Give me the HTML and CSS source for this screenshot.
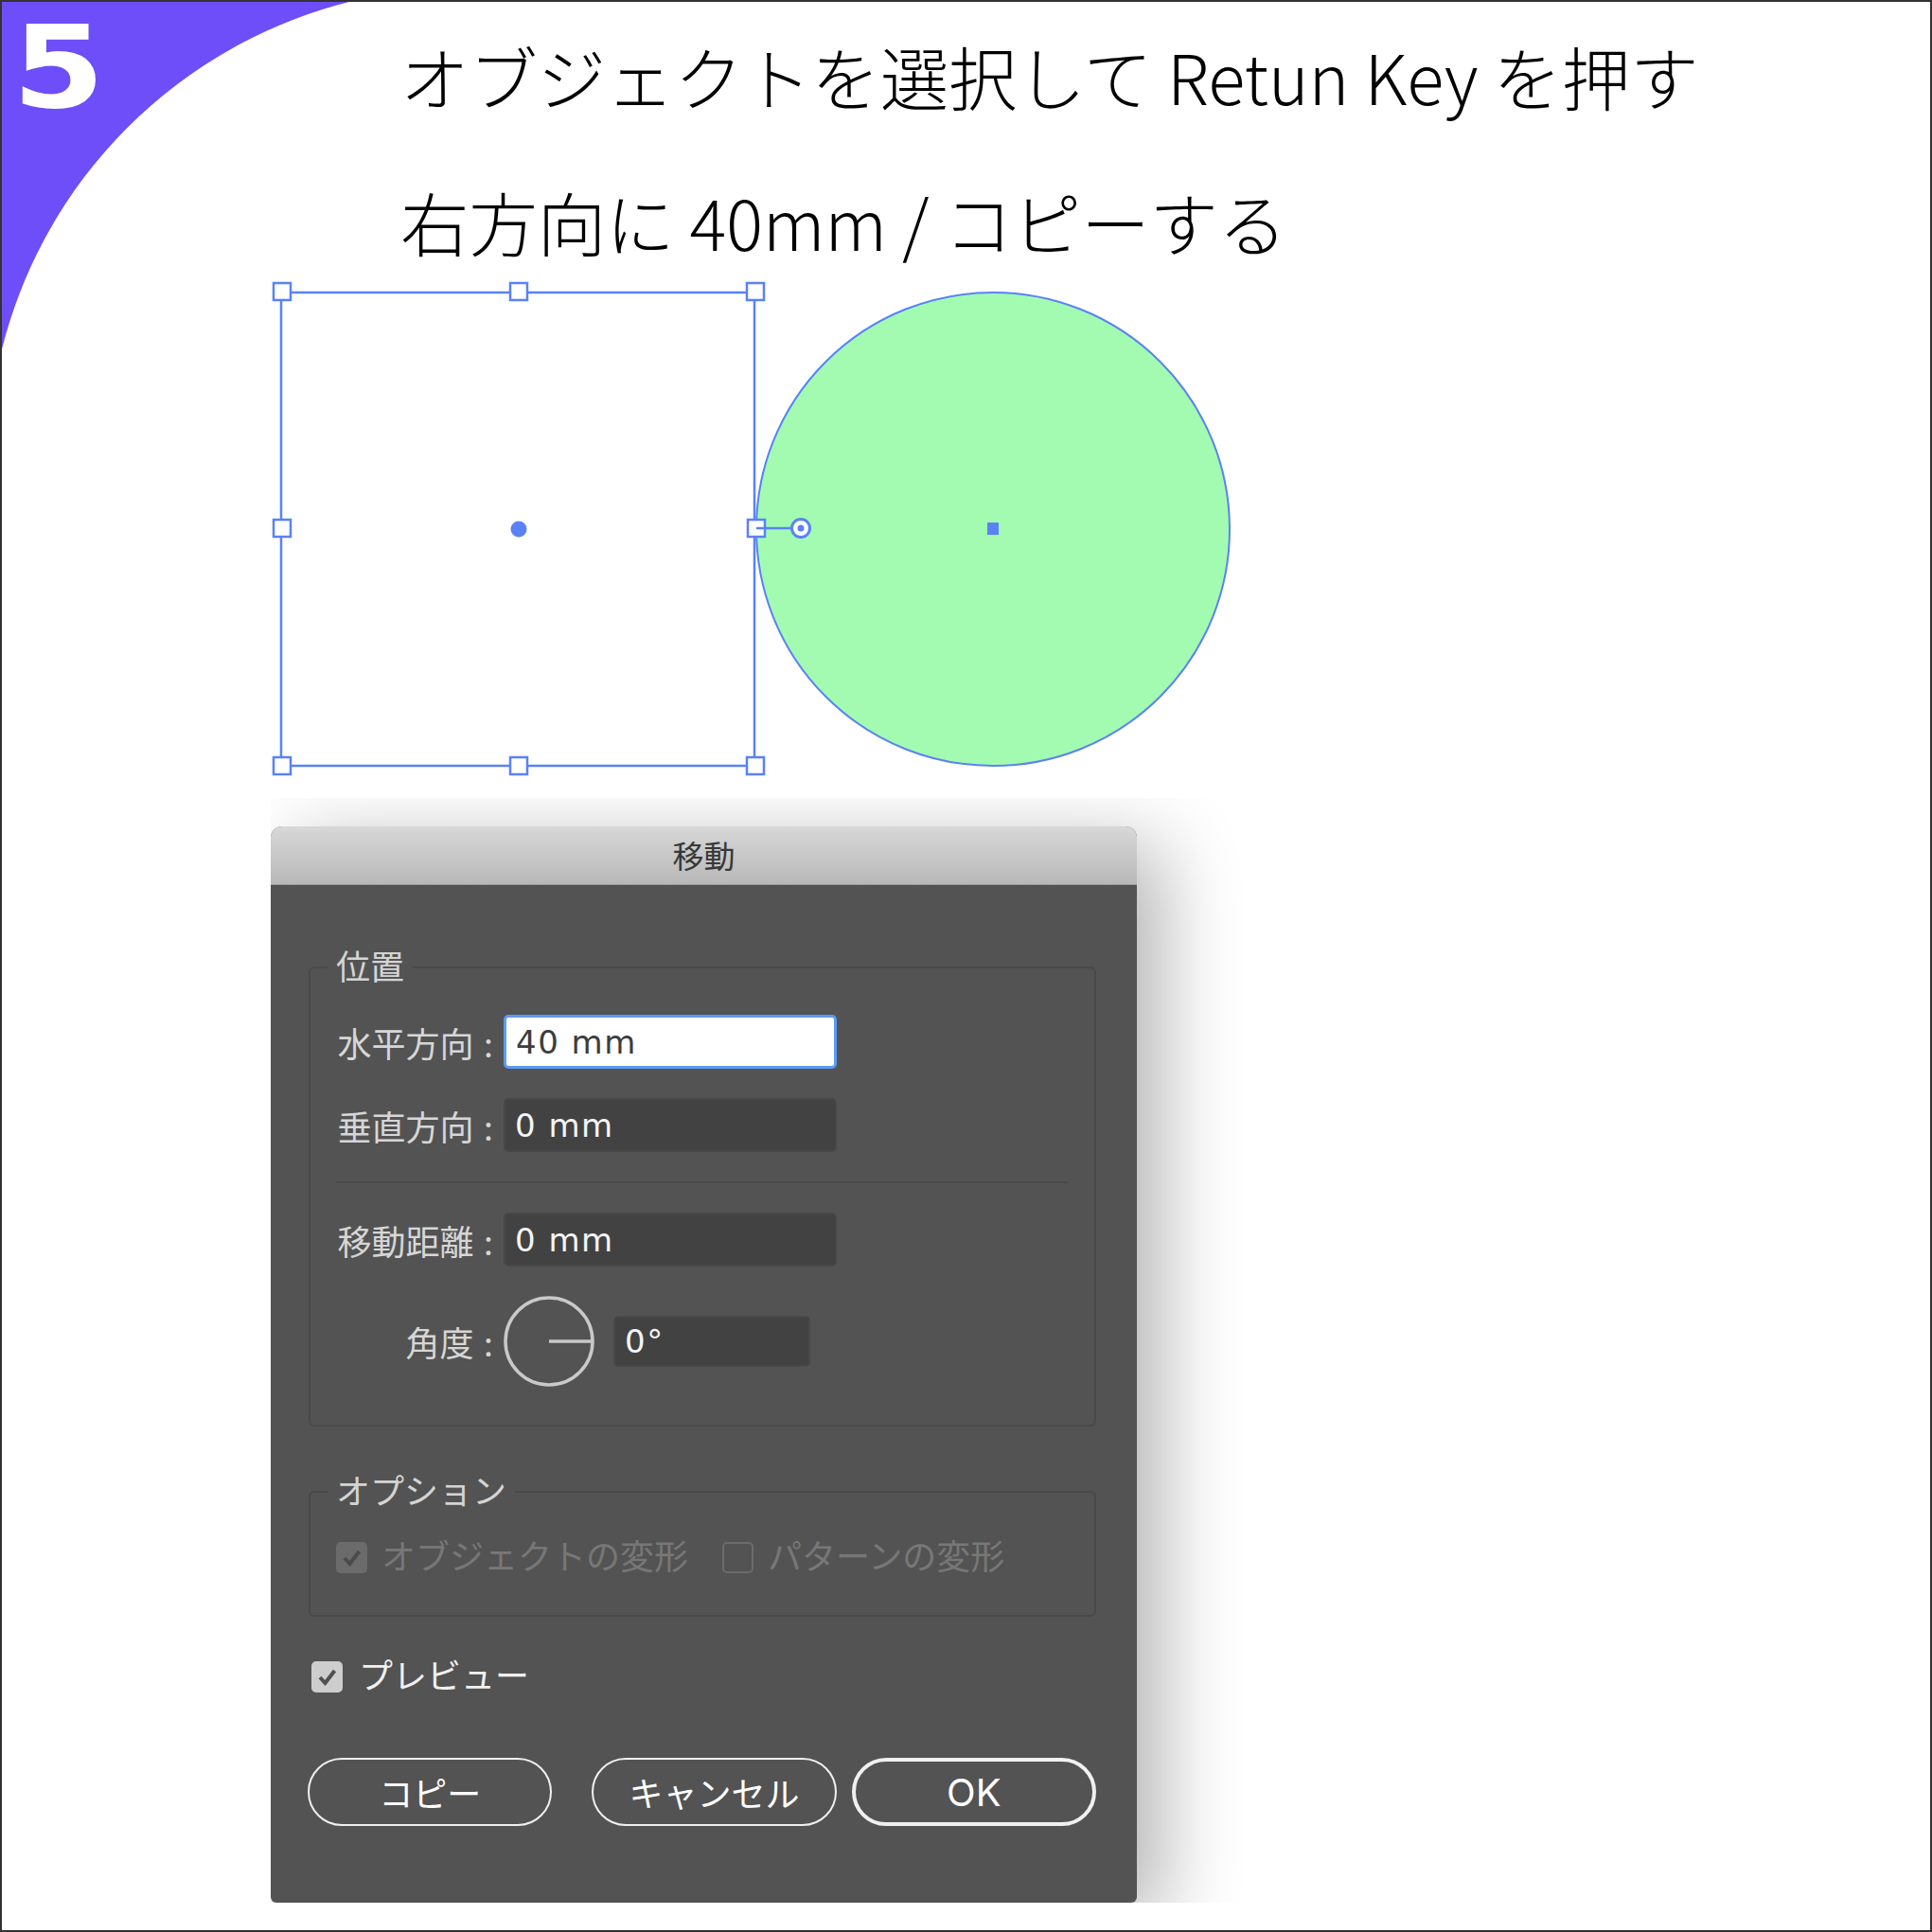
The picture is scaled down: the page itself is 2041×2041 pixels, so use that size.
FILE: index.html
```html
<!DOCTYPE html>
<html lang="ja">
<head>
<meta charset="UTF-8" />
<meta name="viewport" content="width=device-width, initial-scale=1" />
<title>手順5 移動とコピー</title>
<link rel="stylesheet" href="styles.css">
</head>
<body>

<div class="page">
  <svg class="corner" width="380" height="380" viewBox="0 0 380 380" aria-hidden="true">
    <path d="M0 0H377A505 505 0 0 0 0 377Z" fill="#6d4ef9" />
  </svg>
  <span class="step-no">5</span>

  <h1 class="title">
    <span class="title-line">オブジェクトを選択して Retun Key を押す</span>
    <span class="title-line">右方向に 40mm / コピーする</span>
  </h1>

  <!-- artboard: selected square and the green circle being moved -->
  <svg class="artwork" width="1030" height="540" viewBox="280 290 1030 540">
    <circle cx="1049" cy="559" r="250" fill="#a2fbb1" stroke="#5a82f6" stroke-width="2" />
    <rect x="297" y="309" width="500" height="500" fill="none" stroke="#5a82f6" stroke-width="2.5" />
    <g fill="#fff" stroke="#5a82f6" stroke-width="2.5">
      <rect x="289" y="299" width="18" height="18" />
      <rect x="539" y="299" width="18" height="18" />
      <rect x="789" y="299" width="18" height="18" />
      <rect x="289" y="549" width="18" height="18" />
      <rect x="289" y="800" width="18" height="18" />
      <rect x="539" y="800" width="18" height="18" />
      <rect x="789" y="800" width="18" height="18" />
    </g>
    <circle cx="548" cy="559" r="8.5" fill="#5a82f6" />
    <rect x="790" y="549" width="18" height="18" fill="#fff" stroke="#5a82f6" stroke-width="2.5" />
    <line x1="799" y1="558" x2="836" y2="558" stroke="#5a82f6" stroke-width="2.5" />
    <circle cx="846" cy="558" r="9.5" fill="#fff" stroke="#5a82f6" stroke-width="3" />
    <circle cx="846" cy="558" r="3.5" fill="#5a82f6" />
    <rect x="1043" y="552" width="12" height="13" fill="#5a82f6" />
  </svg>

  <div class="dialog-shot">
    <div class="dialog">
      <div class="dialog-title">移動</div>
      <div class="dialog-body">

        <fieldset class="group group-position">
          <legend>位置</legend>
          <div class="field-grid">
            <label for="moveH">水平方向 :</label>
            <input id="moveH" class="num is-focused" value="40 mm" readonly />

            <label for="moveV">垂直方向 :</label>
            <input id="moveV" class="num" value="0 mm" readonly />

            <hr class="sep" />

            <label for="moveDist">移動距離 :</label>
            <input id="moveDist" class="num" value="0 mm" readonly />

            <label for="moveAngle">角度 :</label>
            <div class="angle">
              <svg class="dial" width="96" height="96" viewBox="0 0 96 96">
                <circle cx="48" cy="48" r="46" fill="none" stroke="#c9c9c9" stroke-width="3.5" />
                <line x1="48" y1="48" x2="94" y2="48" stroke="#c9c9c9" stroke-width="3.5" />
              </svg>
              <input id="moveAngle" class="num num-short" value="0°" readonly />
            </div>
          </div>
        </fieldset>

        <fieldset class="group group-options">
          <legend>オプション</legend>
          <div class="check-row">
            <span class="check is-checked is-disabled">
              <svg width="33" height="33" viewBox="0 0 33 33"><path d="M9 17l5.5 6 10-13" fill="none" stroke="#4a4a4a" stroke-width="4" /></svg>
            </span>
            <span class="check-label is-disabled">オブジェクトの変形</span>
            <span class="check is-disabled check-gap"></span>
            <span class="check-label is-disabled">パターンの変形</span>
          </div>
        </fieldset>

        <div class="preview-row">
          <span class="check is-checked">
            <svg width="33" height="33" viewBox="0 0 33 33"><path d="M9 17l5.5 6 10-13" fill="none" stroke="#505050" stroke-width="4" /></svg>
          </span>
          <span class="check-label">プレビュー</span>
        </div>

        <div class="buttons">
          <button type="button" class="btn">コピー</button>
          <button type="button" class="btn btn-cancel">キャンセル</button>
          <button type="button" class="btn btn-default">OK</button>
        </div>

      </div>
    </div>
  </div>
</div>

</body>
</html>
```

FILE: styles.css
```css
body {
  margin: 0;
  background: #fff;
}
.page {
  position: relative;
  width: 2041px;
  height: 2041px;
  box-sizing: border-box;
  border: 2px solid #333;
  overflow: hidden;
  background: #fff;
  font-family: "Noto Sans CJK JP", sans-serif;
}
.corner {
  position: absolute;
  top: -2px;
  left: -2px;
}
.step-no {
  position: absolute;
  top: -1px;
  left: 11px;
  font-family: "DejaVu Sans", sans-serif;
  font-weight: 700;
  font-size: 121px;
  line-height: 141px;
  color: #fff;
  transform: scaleX(1.16);
  transform-origin: left top;
}
.title {
  margin: 0;
  padding: 28px 0 0 421px;
  font-size: 72.4px;
  font-weight: 300;
  line-height: 100px;
  color: #000;
}
.title-line {
  display: block;
  white-space: nowrap;
}
.title-line + .title-line {
  margin-top: 54px;
}
.artwork {
  display: block;
  margin: 6px 0 0 278px;
}

/* dialog screenshot */
.dialog-shot {
  width: fit-content;
  margin: 13px 0 0 284px;
  padding: 30px 160px 0 0;
  overflow: hidden;
}
.dialog {
  width: 915px;
  height: 1137px;
  box-sizing: border-box;
  background: #535353;
  border-radius: 12px 12px 6px 6px;
  box-shadow: 26px 20px 84px rgba(0,0,0,0.3);
  font-family: "Inter", "Noto Sans CJK JP", sans-serif;
}
.dialog-title {
  height: 62px;
  box-sizing: border-box;
  border-bottom: 1px solid #9c9c9c;
  border-radius: 12px 12px 0 0;
  background: linear-gradient(#d8d8d8, #b8b8b8);
  text-align: center;
  font-family: "Noto Sans CJK JP", sans-serif;
  font-size: 33px;
  line-height: 61px;
  color: #383838;
}
.dialog-body {
  padding: 65px 43px 0 40px;
}
.group {
  margin: 0;
  min-width: 0;
  padding: 28px 27px 40px;
  border: 2px solid #494949;
  border-radius: 6px;
}
.group legend {
  margin-left: -9px;
  padding: 0 9px;
  font-size: 36px;
  line-height: 44px;
  color: #d4d4d4;
}
.field-grid {
  display: grid;
  grid-template-columns: 170px auto;
  column-gap: 7px;
  row-gap: 31px;
  align-items: center;
  justify-items: start;
}
.field-grid label {
  justify-self: end;
  padding-right: 4px;
  font-size: 36px;
  color: #d6d6d6;
  white-space: nowrap;
}
.num {
  width: 352px;
  height: 57px;
  box-sizing: border-box;
  margin: 0;
  padding: 0 10px;
  border: 2px solid #484848;
  border-radius: 5px;
  background: #424242;
  color: #f4f4f4;
  font-family: "DejaVu Sans", sans-serif;
  font-size: 34px;
  letter-spacing: 1.5px;
  outline: none;
}
.num.is-focused {
  border: 3px solid #5b9bf5;
  background: #fff;
  color: #3d3d3d;
}
.num-short {
  width: 208px;
  height: 54px;
}
.sep {
  grid-column: 1 / -1;
  justify-self: stretch;
  height: 2px;
  margin: 0;
  border: 0;
  background: #4a4a4a;
}
.angle {
  display: flex;
  align-items: center;
  gap: 20px;
}
.dial {
  display: block;
}
.group-options {
  margin-top: 47px;
  padding: 31px 27px 44px;
}
.check-row,
.preview-row {
  display: flex;
  align-items: center;
}
.check {
  display: inline-flex;
  flex: none;
  width: 33px;
  height: 33px;
  box-sizing: border-box;
  border-radius: 5px;
  background: #cdcdcd;
}
.check.is-disabled {
  background: #6b6b6b;
}
.check.is-disabled:not(.is-checked) {
  background: none;
  border: 2px solid #6b6b6b;
}
.check-gap {
  margin-left: 36px;
}
.check-label {
  margin-left: 15px;
  font-size: 36px;
  line-height: 33px;
  color: #f0f0f0;
  white-space: nowrap;
}
.check-label.is-disabled {
  color: #777;
}
.preview-row {
  margin: 47px 0 0 3px;
}
.preview-row .check-label {
  margin-left: 17px;
}
.buttons {
  display: flex;
  margin: 69px 0 0 -1px;
}
.btn {
  width: 259px;
  height: 72px;
  box-sizing: border-box;
  padding: 0;
  border: 2.5px solid #f0f0f0;
  border-radius: 36px;
  background: transparent;
  color: #fff;
  font-family: "Inter", "Noto Sans CJK JP", sans-serif;
  font-size: 36px;
}
.btn-cancel {
  margin-left: 42px;
}
.btn-default {
  margin-left: 16px;
  border-width: 4px;
  font-size: 40px;
}
```
